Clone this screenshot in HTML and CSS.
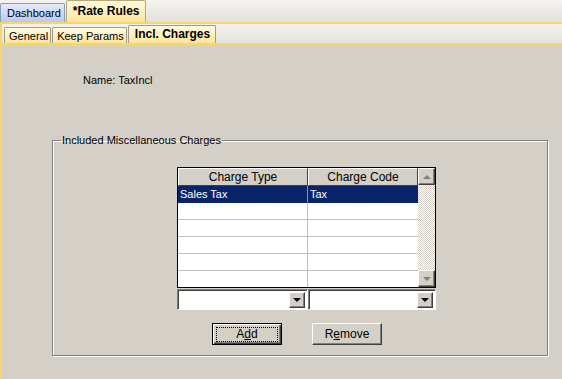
FILE: index.html
```html
<!DOCTYPE html>
<html lang="en">
<head>
    <meta charset="UTF-8">
    <title>Rate Rules</title>
    <link rel="stylesheet" href="styles.css">
</head>
<body>

    <!-- Document tabs -->
    <div class="doc-tabs">
        <div class="doc-tab">Dashboard</div>
        <div class="doc-tab active">*Rate Rules</div>
    </div>

    <div class="page">
        <!-- Page tabs -->
        <div class="page-tabs">
            <div class="page-tab">General</div>
            <div class="page-tab">Keep Params</div>
            <div class="page-tab active">Incl. Charges</div>
        </div>

        <div class="content">
            <p class="name-label">Name: TaxIncl</p>

            <fieldset class="group">
                <legend>Included Miscellaneous Charges</legend>

                <div class="grid-area">
                    <div class="grid">
                        <div class="grid-body">
                            <div class="grid-row head">
                                <div class="cell col-type">Charge Type</div>
                                <div class="cell col-code">Charge Code</div>
                            </div>
                            <div class="grid-row selected">
                                <div class="cell col-type">Sales Tax</div>
                                <div class="cell col-code">Tax</div>
                            </div>
                            <div class="grid-row"><div class="cell col-type"></div><div class="cell col-code"></div></div>
                            <div class="grid-row"><div class="cell col-type"></div><div class="cell col-code"></div></div>
                            <div class="grid-row"><div class="cell col-type"></div><div class="cell col-code"></div></div>
                            <div class="grid-row"><div class="cell col-type"></div><div class="cell col-code"></div></div>
                            <div class="grid-row"><div class="cell col-type"></div><div class="cell col-code"></div></div>
                        </div>
                        <div class="scrollbar">
                            <div class="sb-btn"><span class="tri up grey"></span></div>
                            <div class="sb-track"></div>
                            <div class="sb-btn"><span class="tri down grey"></span></div>
                        </div>
                    </div>

                    <div class="combos">
                        <div class="combo type"><div class="combo-btn"><span class="tri down"></span></div></div>
                        <div class="combo code"><div class="combo-btn"><span class="tri down"></span></div></div>
                    </div>
                </div>

                <div class="buttons">
                    <button class="btn default"><span class="focus">A<u>d</u>d</span></button>
                    <button class="btn">R<u>e</u>move</button>
                </div>
            </fieldset>
        </div>
    </div>

</body>
</html>
```

FILE: styles.css
```css
body {
    margin: 0;
    font-family: "Liberation Sans", Arial, sans-serif;
    font-size: 11px;
    color: #000;
    background: #d4d0c8;
    height: 379px;
    overflow: hidden;
}
/* Top document tabs */
.doc-tabs {
    display: flex;
    align-items: flex-end;
    height: 22px;
    background: linear-gradient(#f5f4f0, #e3e1da);
    border-bottom: 2px solid #f9d66b;
}
.doc-tab {
    box-sizing: border-box;
    height: 19px;
    line-height: 18px;
    padding: 0 3px 0 6px;
    margin-right: 1px;
    border: 1px solid #8f9bb3;
    border-bottom: none;
    border-radius: 2px 2px 0 0;
    background: linear-gradient(#e4ebfa, #b8c8ee);
    font-size: 11px;
    white-space: nowrap;
}
.doc-tab.active {
    height: 22px;
    line-height: 21px;
    padding: 0 5px 0 6px;
    font-size: 12px;
    font-weight: bold;
    border-color: #b8a878;
    background: linear-gradient(#fff9dc, #fde69a);
}
/* Page with yellow frame */
.page {
    border-left: 2px solid #f9d66b;
    height: 355px;
}
.page-tabs {
    display: flex;
    align-items: flex-end;
    height: 18px;
    padding: 1px 0 0 2px;
    background: linear-gradient(#f3f2ee, #e5e3dc);
    border-bottom: 2px solid #f9d66b;
}
.page-tab {
    box-sizing: border-box;
    height: 16px;
    line-height: 16px;
    padding: 0 2px 0 4px;
    margin-right: 1px;
    border: 1px solid #a09a88;
    border-bottom: none;
    border-radius: 2px 2px 0 0;
    background: linear-gradient(#fffbe4, #fde49a);
    font-size: 11px;
    white-space: nowrap;
}
.page-tab.active {
    height: 18px;
    line-height: 17px;
    padding: 0 5px 0 6px;
    font-size: 12px;
    font-weight: bold;
}
.content {
    padding-top: 29px;
}
.name-label {
    margin: 0 0 0 81px;
    line-height: 13px;
}
/* Group box */
.group {
    margin: 47px 0 0 50px;
    padding: 0;
    width: 494px;
    height: 220px;
    border: 1px solid #808080;
    box-shadow: 1px 1px 0 #fff, inset 1px 1px 0 #fff;
}
.group legend {
    margin-left: 8px;
    padding: 0 1px;
    line-height: 13px;
}
.grid-area {
    width: 259px;
    margin: 20px 0 0 124px;
}
.grid {
    display: flex;
    height: 119px;
    border: 1px solid #000;
    background: #fff;
}
.grid-body {
    flex: 1;
    overflow: hidden;
}
.grid-row {
    display: flex;
    height: 17px;
}
.cell {
    box-sizing: border-box;
    height: 17px;
    line-height: 16px;
    padding-left: 2px;
    border-right: 1px solid #c0c0c0;
    border-bottom: 1px solid #c0c0c0;
    white-space: nowrap;
}
.col-type {
    width: 130px;
}
.col-code {
    width: 110px;
    border-right: none;
}
.grid-row.head {
    height: 18px;
}
.grid-row.head .cell {
    height: 18px;
    line-height: 16px;
    padding-left: 0;
    text-align: center;
    font-size: 12px;
    background: #d4d0c8;
    border: 1px solid;
    border-color: #fff #404040 #404040 #fff;
}
.grid-row.selected .cell {
    background: #0a246a;
    color: #fff;
    border-bottom-color: #0a246a;
    border-right-color: #8090c0;
}
.grid-row.selected .col-code {
    border-right: none;
}
/* Scrollbar */
.scrollbar {
    display: flex;
    flex-direction: column;
    width: 17px;
}
.sb-btn {
    box-sizing: border-box;
    height: 17px;
    display: flex;
    align-items: center;
    justify-content: center;
    background: #d4d0c8;
    border: 1px solid;
    border-color: #fff #404040 #404040 #fff;
    box-shadow: inset -1px -1px 0 #808080;
}
.sb-track {
    flex: 1;
    background-color: #fff;
    background-image: linear-gradient(45deg, #d4d0c8 25%, transparent 25%, transparent 75%, #d4d0c8 75%),
        linear-gradient(45deg, #d4d0c8 25%, transparent 25%, transparent 75%, #d4d0c8 75%);
    background-size: 2px 2px;
    background-position: 0 0, 1px 1px;
}
.tri {
    width: 0;
    height: 0;
    border-left: 4px solid transparent;
    border-right: 4px solid transparent;
}
.tri.up {
    border-bottom: 4px solid #000;
}
.tri.down {
    border-top: 4px solid #000;
}
.tri.grey.up {
    border-bottom-color: #808080;
}
.tri.grey.down {
    border-top-color: #808080;
}
/* Combos */
.combos {
    display: flex;
    margin-top: 1px;
}
.combo {
    box-sizing: border-box;
    height: 21px;
    display: flex;
    justify-content: flex-end;
    padding: 2px;
    background: #fff;
    border: 1px solid;
    border-color: #808080 #fff #fff #808080;
    box-shadow: inset 1px 1px 0 #404040;
}
.combo.type {
    width: 131px;
}
.combo.code {
    width: 128px;
}
.combo-btn {
    box-sizing: border-box;
    width: 16px;
    height: 16px;
    display: flex;
    align-items: center;
    justify-content: center;
    background: #d4d0c8;
    border: 1px solid;
    border-color: #fff #404040 #404040 #fff;
    box-shadow: inset -1px -1px 0 #808080;
}
/* Buttons */
.buttons {
    display: flex;
    gap: 30px;
    margin: 13px 0 0 159px;
}
.btn {
    box-sizing: border-box;
    width: 70px;
    height: 22px;
    padding: 0;
    font-family: "Liberation Sans", Arial, sans-serif;
    font-size: 12px;
    color: #000;
    background: #d4d0c8;
    border: 1px solid;
    border-color: #fff #404040 #404040 #fff;
    box-shadow: inset -1px -1px 0 #808080;
}
.btn.default {
    border: 1px solid #000;
    box-shadow: inset 1px 1px 0 #fff, inset -1px -1px 0 #404040, inset -2px -2px 0 #808080;
}
.btn .focus {
    display: block;
    margin: 0 3px;
    line-height: 13px;
    border: 1px dotted #000;
}
```
